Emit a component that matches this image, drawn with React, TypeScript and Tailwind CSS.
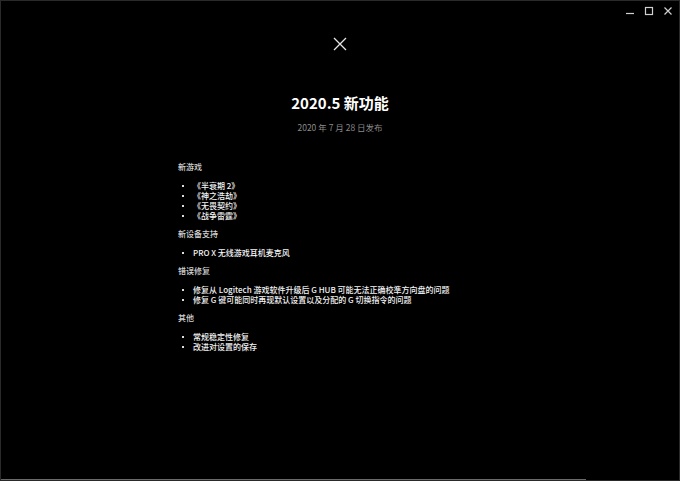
import React from 'react';

const SECTIONS = [
  { title: '新游戏', items: ['《半衰期 2》', '《神之浩劫》', '《无畏契约》', '《战争雷霆》'] },
  { title: '新设备支持', items: ['PRO X 无线游戏耳机麦克风'] },
  {
    title: '错误修复',
    items: [
      '修复从 Logitech 游戏软件升级后 G HUB 可能无法正确校準方向盘的问题',
      '修复 G 键可能同时再现默认设置以及分配的 G 切换指令的问题',
    ],
  },
  { title: '其他', items: ['常规稳定性修复', '改进对设置的保存'] },
];

const FONT = { fontFamily: '"Noto Sans CJK SC", "Noto Sans", sans-serif' };

export default function App() {
  return (
    <div
      className="relative w-[680px] h-[481px] bg-black border border-[#2a2a2a] overflow-hidden text-white"
      style={FONT}
    >
      {/* window controls */}
      <div className="flex justify-end items-center h-[20px] pr-[6px] gap-[9px] text-[#d0d0d0]">
        <svg width="10" height="10" viewBox="0 0 10 10">
          <path d="M1 7.5h8" stroke="currentColor" strokeWidth="1.2" />
        </svg>
        <svg width="10" height="10" viewBox="0 0 10 10">
          <rect x="1.5" y="1.5" width="7" height="7" fill="none" stroke="currentColor" strokeWidth="1.2" />
        </svg>
        <svg width="10" height="10" viewBox="0 0 10 10">
          <path d="M1.5 1.5l7 7M8.5 1.5l-7 7" stroke="currentColor" strokeWidth="1.2" />
        </svg>
      </div>

      <div className="flex flex-col items-center">
        <svg className="mt-[16px]" width="14" height="14" viewBox="0 0 14 14">
          <path d="M1 1l12 12M13 1L1 13" stroke="#e6e6e6" strokeWidth="1.3" />
        </svg>
        <h1 className="mt-[42px] h-[20px] text-[15px] leading-[20px] font-bold text-white">2020.5 新功能</h1>
        <p className="mt-[8px] h-[12px] text-[8.5px] leading-[12px] text-[#8a8a8a]">2020 年 7 月 28 日发布</p>
      </div>

      <div className="ml-[177px] mt-[29px] text-[8px] font-medium">
        {SECTIONS.map((s, i) => (
          <div key={i} className={i > 0 ? 'mt-[8px]' : ''}>
            <div className="h-[10px] leading-[10px] text-[#d4d4d4]">{s.title}</div>
            <ul className="mt-[9px]">
              {s.items.map((it, j) => (
                <li key={j} className="flex items-center h-[10px] leading-[10px] text-[#f4f4f4]">
                  <span className="ml-[4px] w-[2px] h-[2px] bg-[#dcdcdc] mr-[9px] shrink-0" />
                  {it}
                </li>
              ))}
            </ul>
          </div>
        ))}
      </div>

      <div className="absolute left-0 bottom-0 w-[585px] h-[1px] bg-[#6a6a6a]" />
    </div>
  );
}
